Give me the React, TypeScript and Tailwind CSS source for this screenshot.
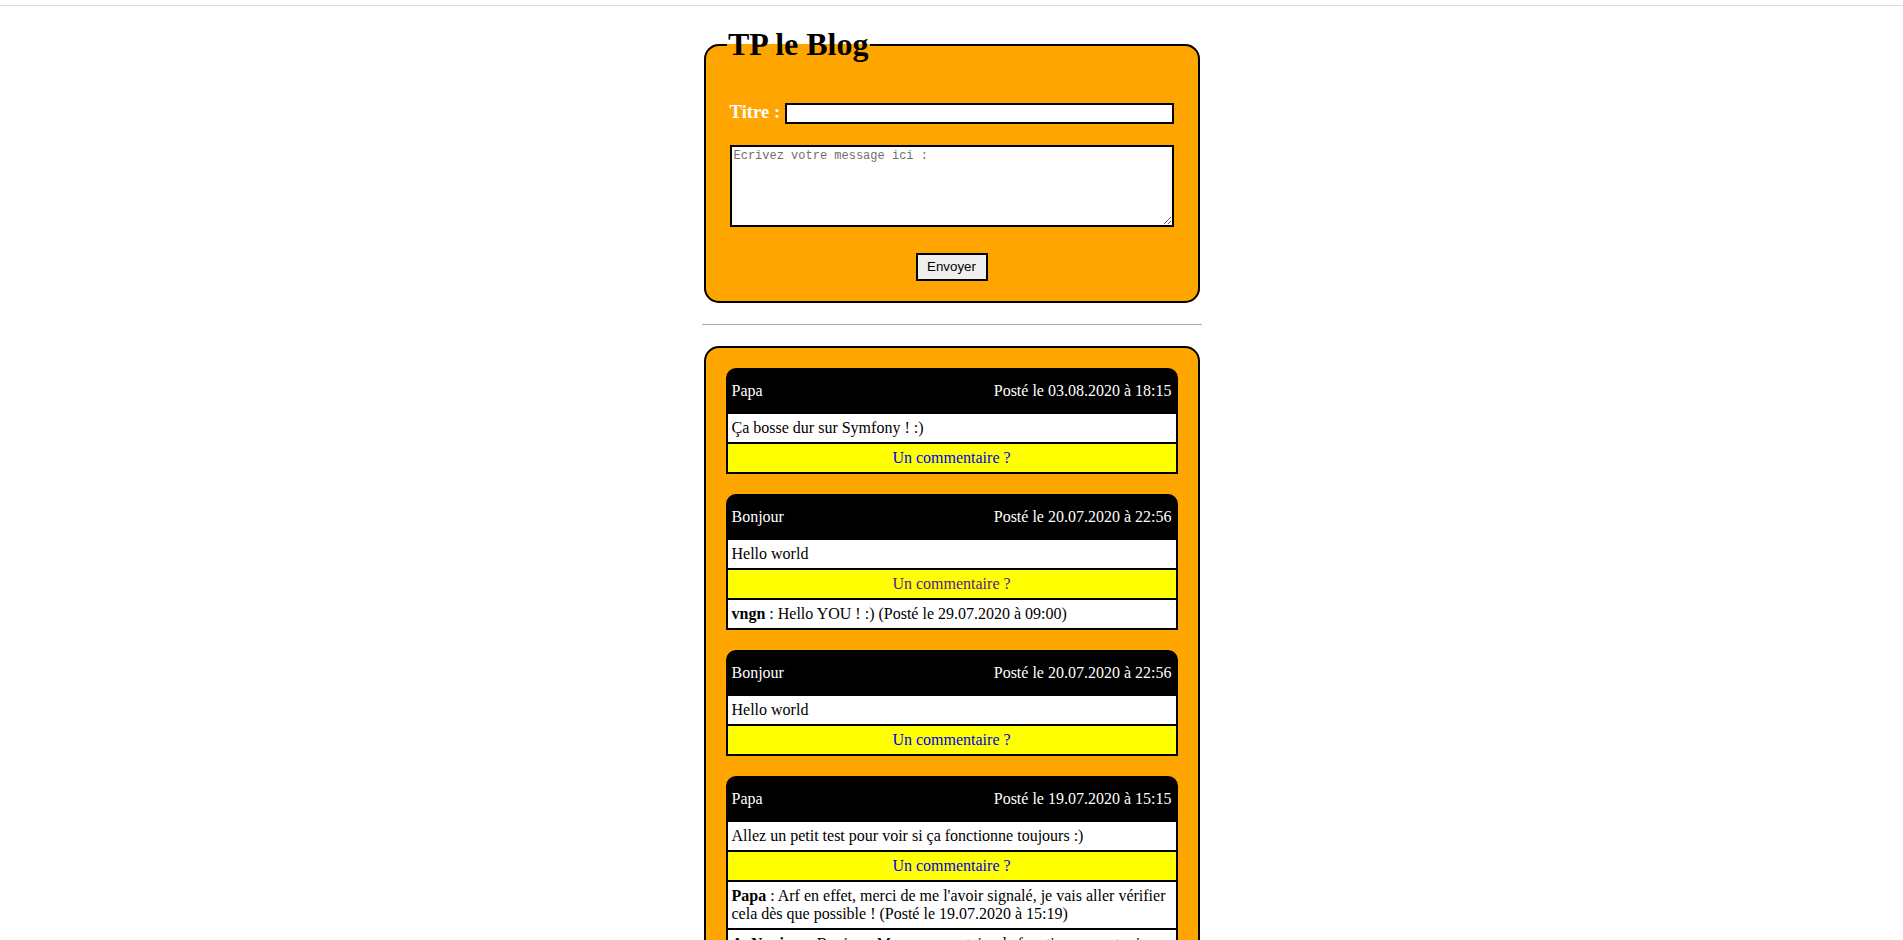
import React from 'react';

type Comment = { author: string; text: string; date: string };

type Post = {
  title: string;
  date: string;
  body: string;
  visited?: boolean;
  comments: Comment[];
};

const posts: Post[] = [
  {
    title: 'Papa',
    date: '03.08.2020 à 18:15',
    body: 'Ça bosse dur sur Symfony ! :)',
    comments: [],
  },
  {
    title: 'Bonjour',
    date: '20.07.2020 à 22:56',
    body: 'Hello world',
    visited: true,
    comments: [{ author: 'vngn', text: 'Hello YOU ! :)', date: '29.07.2020 à 09:00' }],
  },
  {
    title: 'Bonjour',
    date: '20.07.2020 à 22:56',
    body: 'Hello world',
    comments: [],
  },
  {
    title: 'Papa',
    date: '19.07.2020 à 15:15',
    body: 'Allez un petit test pour voir si ça fonctionne toujours :)',
    comments: [
      {
        author: 'Papa',
        text: "Arf en effet, merci de me l'avoir signalé, je vais aller vérifier cela dès que possible !",
        date: '19.07.2020 à 15:19',
      },
      {
        author: 'A. Nonime',
        text: 'Bonjour, Mon commentaire de fonctionne pas toujours très bien...',
        date: '19.07.2020 à 14:02',
      },
    ],
  },
];

const PostCard: React.FC<{ post: Post }> = ({ post }) => (
  <div className="w-full text-[16px] leading-[18px]">
    <div className="flex h-[46px] items-center justify-between rounded-t-[10px] bg-black px-[6px] text-white">
      <span>{post.title}</span>
      <span>Posté le {post.date}</span>
    </div>
    <div className="border-x-2 border-b-2 border-black bg-white px-[4px] py-[5px]">{post.body}</div>
    <div className="border-x-2 border-b-2 border-black bg-[#ffff00] px-[4px] py-[5px] text-center">
      <a href="#" className={post.visited ? 'text-[#551a8b]' : 'text-[#0000ee]'}>
        Un commentaire ?
      </a>
    </div>
    {post.comments.map((c, i) => (
      <div key={i} className="border-x-2 border-b-2 border-black bg-white px-[4px] py-[5px]">
        <b>{c.author}</b> : {c.text} (Posté le {c.date})
      </div>
    ))}
  </div>
);

export default function App() {
  return (
    <div className="min-h-screen bg-white font-['Liberation_Serif',serif] text-black">
      <div className="h-[6px] border-b border-[#dcdcdc]" />
      <div className="mx-auto w-[500px] pt-[20px] pb-[40px]">
        <form onSubmit={(e) => e.preventDefault()}>
          <fieldset className="mx-[2px] rounded-[15px] border-2 border-black bg-[#ffa500] px-[24px] pb-[20px]">
            <legend className="ml-[-3px] px-[1.5px] text-[32px] font-bold leading-[37px]">TP le Blog</legend>
            <div className="mt-[38px] flex items-baseline gap-[5px]">
              <label htmlFor="titre" className="text-[18.72px] font-bold leading-[21px] text-white">
                Titre :
              </label>
              <input
                id="titre"
                type="text"
                className="h-[21px] flex-1 border-2 border-black bg-white px-[2px] font-['Liberation_Sans',sans-serif] text-[13.33px] outline-none"
              />
            </div>
            <textarea
              placeholder="Ecrivez votre message ici :"
              className="mt-[21px] block h-[82px] w-full border-2 border-black bg-white p-[2px] font-['Liberation_Mono',monospace] text-[12px] leading-[15px] outline-none placeholder:text-[#6f6f6f]"
            />
            <button
              type="submit"
              className="mx-auto mt-[26px] block h-[28px] w-[72px] border-2 border-black bg-[#efefef] font-['Liberation_Sans',sans-serif] text-[13.33px] text-black"
            >
              Envoyer
            </button>
          </fieldset>
        </form>

        <div className="mt-[21px] h-px bg-[#a9a9a9]" />

        <div className="mx-[2px] mt-[21px] flex flex-col gap-[20px] rounded-[15px] border-2 border-black bg-[#ffa500] p-[20px]">
          {posts.map((post, i) => (
            <PostCard key={i} post={post} />
          ))}
        </div>
      </div>
    </div>
  );
}
